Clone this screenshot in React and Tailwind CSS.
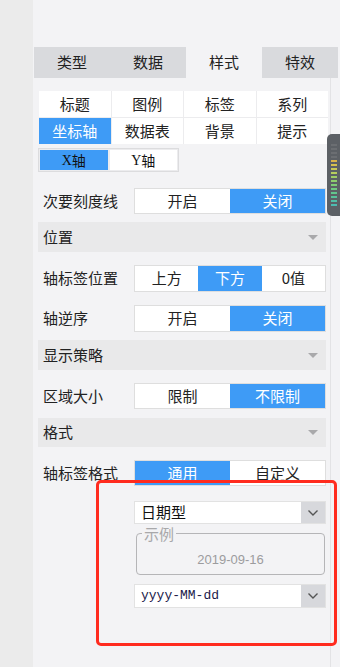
import React from 'react';

const font = { fontFamily: '"Noto Sans CJK SC", "Noto Sans", sans-serif' };

const Toggle = ({ options, active, h = 'h-[26px]' }) => (
  <div className={`flex w-[192px] ${h} border border-[#dedede] bg-white`}>
    {options.map((o, i) => (
      <div
        key={o}
        className={`flex-1 flex items-center justify-center text-[15px] ${
          i === active ? 'bg-[#3e9bf6] text-white' : 'bg-white text-[#222]'
        }`}
      >
        {o}
      </div>
    ))}
  </div>
);

const Row = ({ label, mt, children }) => (
  <div className={`flex items-center ${mt}`}>
    <div className="w-[96px] pl-[5px] text-[15px] text-[#222] whitespace-nowrap">{label}</div>
    {children}
  </div>
);

const Header = ({ title, mt, h = 'h-[30px]' }) => (
  <div className={`${mt} ${h} bg-[#e9e9ea] flex items-center justify-between pl-[5px] pr-[8px]`}>
    <span className="text-[15px] text-[#222]">{title}</span>
    <span className="w-0 h-0 border-l-[5px] border-r-[5px] border-t-[5px] border-l-transparent border-r-transparent border-t-[#a9a9ab]" />
  </div>
);

const Chevron = () => (
  <svg width="12" height="8" viewBox="0 0 12 8" fill="none">
    <path d="M1.5 1.5 L6 6 L10.5 1.5" stroke="#555" strokeWidth="1.4" />
  </svg>
);

const Select = ({ children, mt, h }) => (
  <div className={`${mt} ml-[96px] w-[192px] ${h} flex bg-white border border-[#e2e2e2]`}>
    <div className="flex-1 flex items-center pl-[6px]">{children}</div>
    <div className="w-[24px] bg-[#d7d8dc] flex items-center justify-center">
      <Chevron />
    </div>
  </div>
);

export default function App() {
  const tabs = ['类型', '数据', '样式', '特效'];
  const subs = ['标题', '图例', '标签', '系列', '坐标轴', '数据表', '背景', '提示'];
  const meter = ['#6b6e72', '#6b6e72', '#6b6e72', '#6b6e72', '#d9b24a', '#d6c04f', '#c9c957', '#b7cd5d', '#9fcd66', '#8fcc6d', '#7fcb76', '#6fc982', '#62c58d', '#58c29a', '#52bfa6', '#4dbcb0'];

  return (
    <div className="relative w-[340px] h-[667px] flex overflow-hidden" style={font}>
      <div className="w-[33px] bg-[#ebebeb]" />
      <div className="flex-1 bg-[#f3f3f5]">
        <div className="mt-[47px] ml-[1px] w-[304px] h-[31px] flex">
          {tabs.map((t, i) => (
            <div
              key={t}
              className={`flex-1 flex items-center justify-center text-[15px] text-[#222] ${
                i === 2 ? 'bg-[#f3f3f5]' : 'bg-[#d9dadd]'
              }`}
            >
              {t}
            </div>
          ))}
        </div>

        <div className="ml-[5px] w-[288px]">
          <div className="mt-[13px] ml-[1px] w-[289px] grid grid-cols-4 gap-[1px] bg-[#ececee]">
            {subs.map((s, i) => (
              <div
                key={s}
                className={`h-[26px] flex items-center justify-center text-[15px] ${
                  i === 4 ? 'bg-[#3e9bf6] text-white' : 'bg-white text-[#222]'
                }`}
              >
                {s}
              </div>
            ))}
          </div>

          <div className="mt-[4px] w-[141px] h-[24px] flex gap-[2px] p-[1px] border border-[#dcdcde] bg-[#ececee]">
            <div className="flex-1 bg-[#3e9bf6] flex items-center justify-center text-[14px] text-[#111]">
              <span style={{ fontFamily: '"Liberation Serif", serif' }}>X</span>轴
            </div>
            <div className="flex-1 bg-white flex items-center justify-center text-[14px] text-[#111]">
              <span style={{ fontFamily: '"Liberation Serif", serif' }}>Y</span>轴
            </div>
          </div>

          <Row label="次要刻度线" mt="mt-[16px]">
            <Toggle options={['开启', '关闭']} active={1} />
          </Row>

          <Header title="位置" mt="mt-[8px]" />

          <Row label="轴标签位置" mt="mt-[13px]">
            <Toggle options={['上方', '下方', '0值']} active={1} h="h-[27px]" />
          </Row>

          <Row label="轴逆序" mt="mt-[13px]">
            <Toggle options={['开启', '关闭']} active={1} h="h-[27px]" />
          </Row>

          <Header title="显示策略" mt="mt-[8px]" />

          <Row label="区域大小" mt="mt-[13px]">
            <Toggle options={['限制', '不限制']} active={1} />
          </Row>

          <Header title="格式" mt="mt-[9px]" h="h-[29px]" />

          <Row label="轴标签格式" mt="mt-[13px]">
            <Toggle options={['通用', '自定义']} active={0} />
          </Row>

          <Select mt="mt-[15px]" h="h-[23px]">
            <span className="text-[15px] text-[#111]">日期型</span>
          </Select>

          <fieldset className="mt-[2px] ml-[98px] w-[189px] h-[49px] border border-[#b5b5b7] rounded-[4px] px-[5px]">
            <legend className="px-[2px] text-[15px] leading-[15px] text-[#a8a8aa]">示例</legend>
            <div className="text-center text-[13px] text-[#9c9c9e] leading-[20px] mt-[9px]" style={{ fontFamily: '"Liberation Sans", sans-serif' }}>
              2019-09-16
            </div>
          </fieldset>

          <Select mt="mt-[9px]" h="h-[24px]">
            <span className="text-[13px] text-[#1a1a4a]" style={{ fontFamily: '"Liberation Mono", monospace' }}>
              yyyy-MM-dd
            </span>
          </Select>
        </div>
      </div>

      <div className="w-px bg-[#e3e3e5] absolute left-[330px] top-[78px] bottom-0" />

      <div className="absolute left-[96px] top-[480px] w-[241px] h-[166px] border-[3px] border-[#ff2b1e] rounded-[5px]" />

      <div className="absolute left-[327px] top-[134px] w-[13px] h-[82px] bg-[#5c6065] rounded-l-[5px] flex flex-col items-center justify-center gap-[2px]">
        {meter.map((c, i) => (
          <div key={i} className="w-[6px] h-[2px]" style={{ backgroundColor: c }} />
        ))}
      </div>
    </div>
  );
}
